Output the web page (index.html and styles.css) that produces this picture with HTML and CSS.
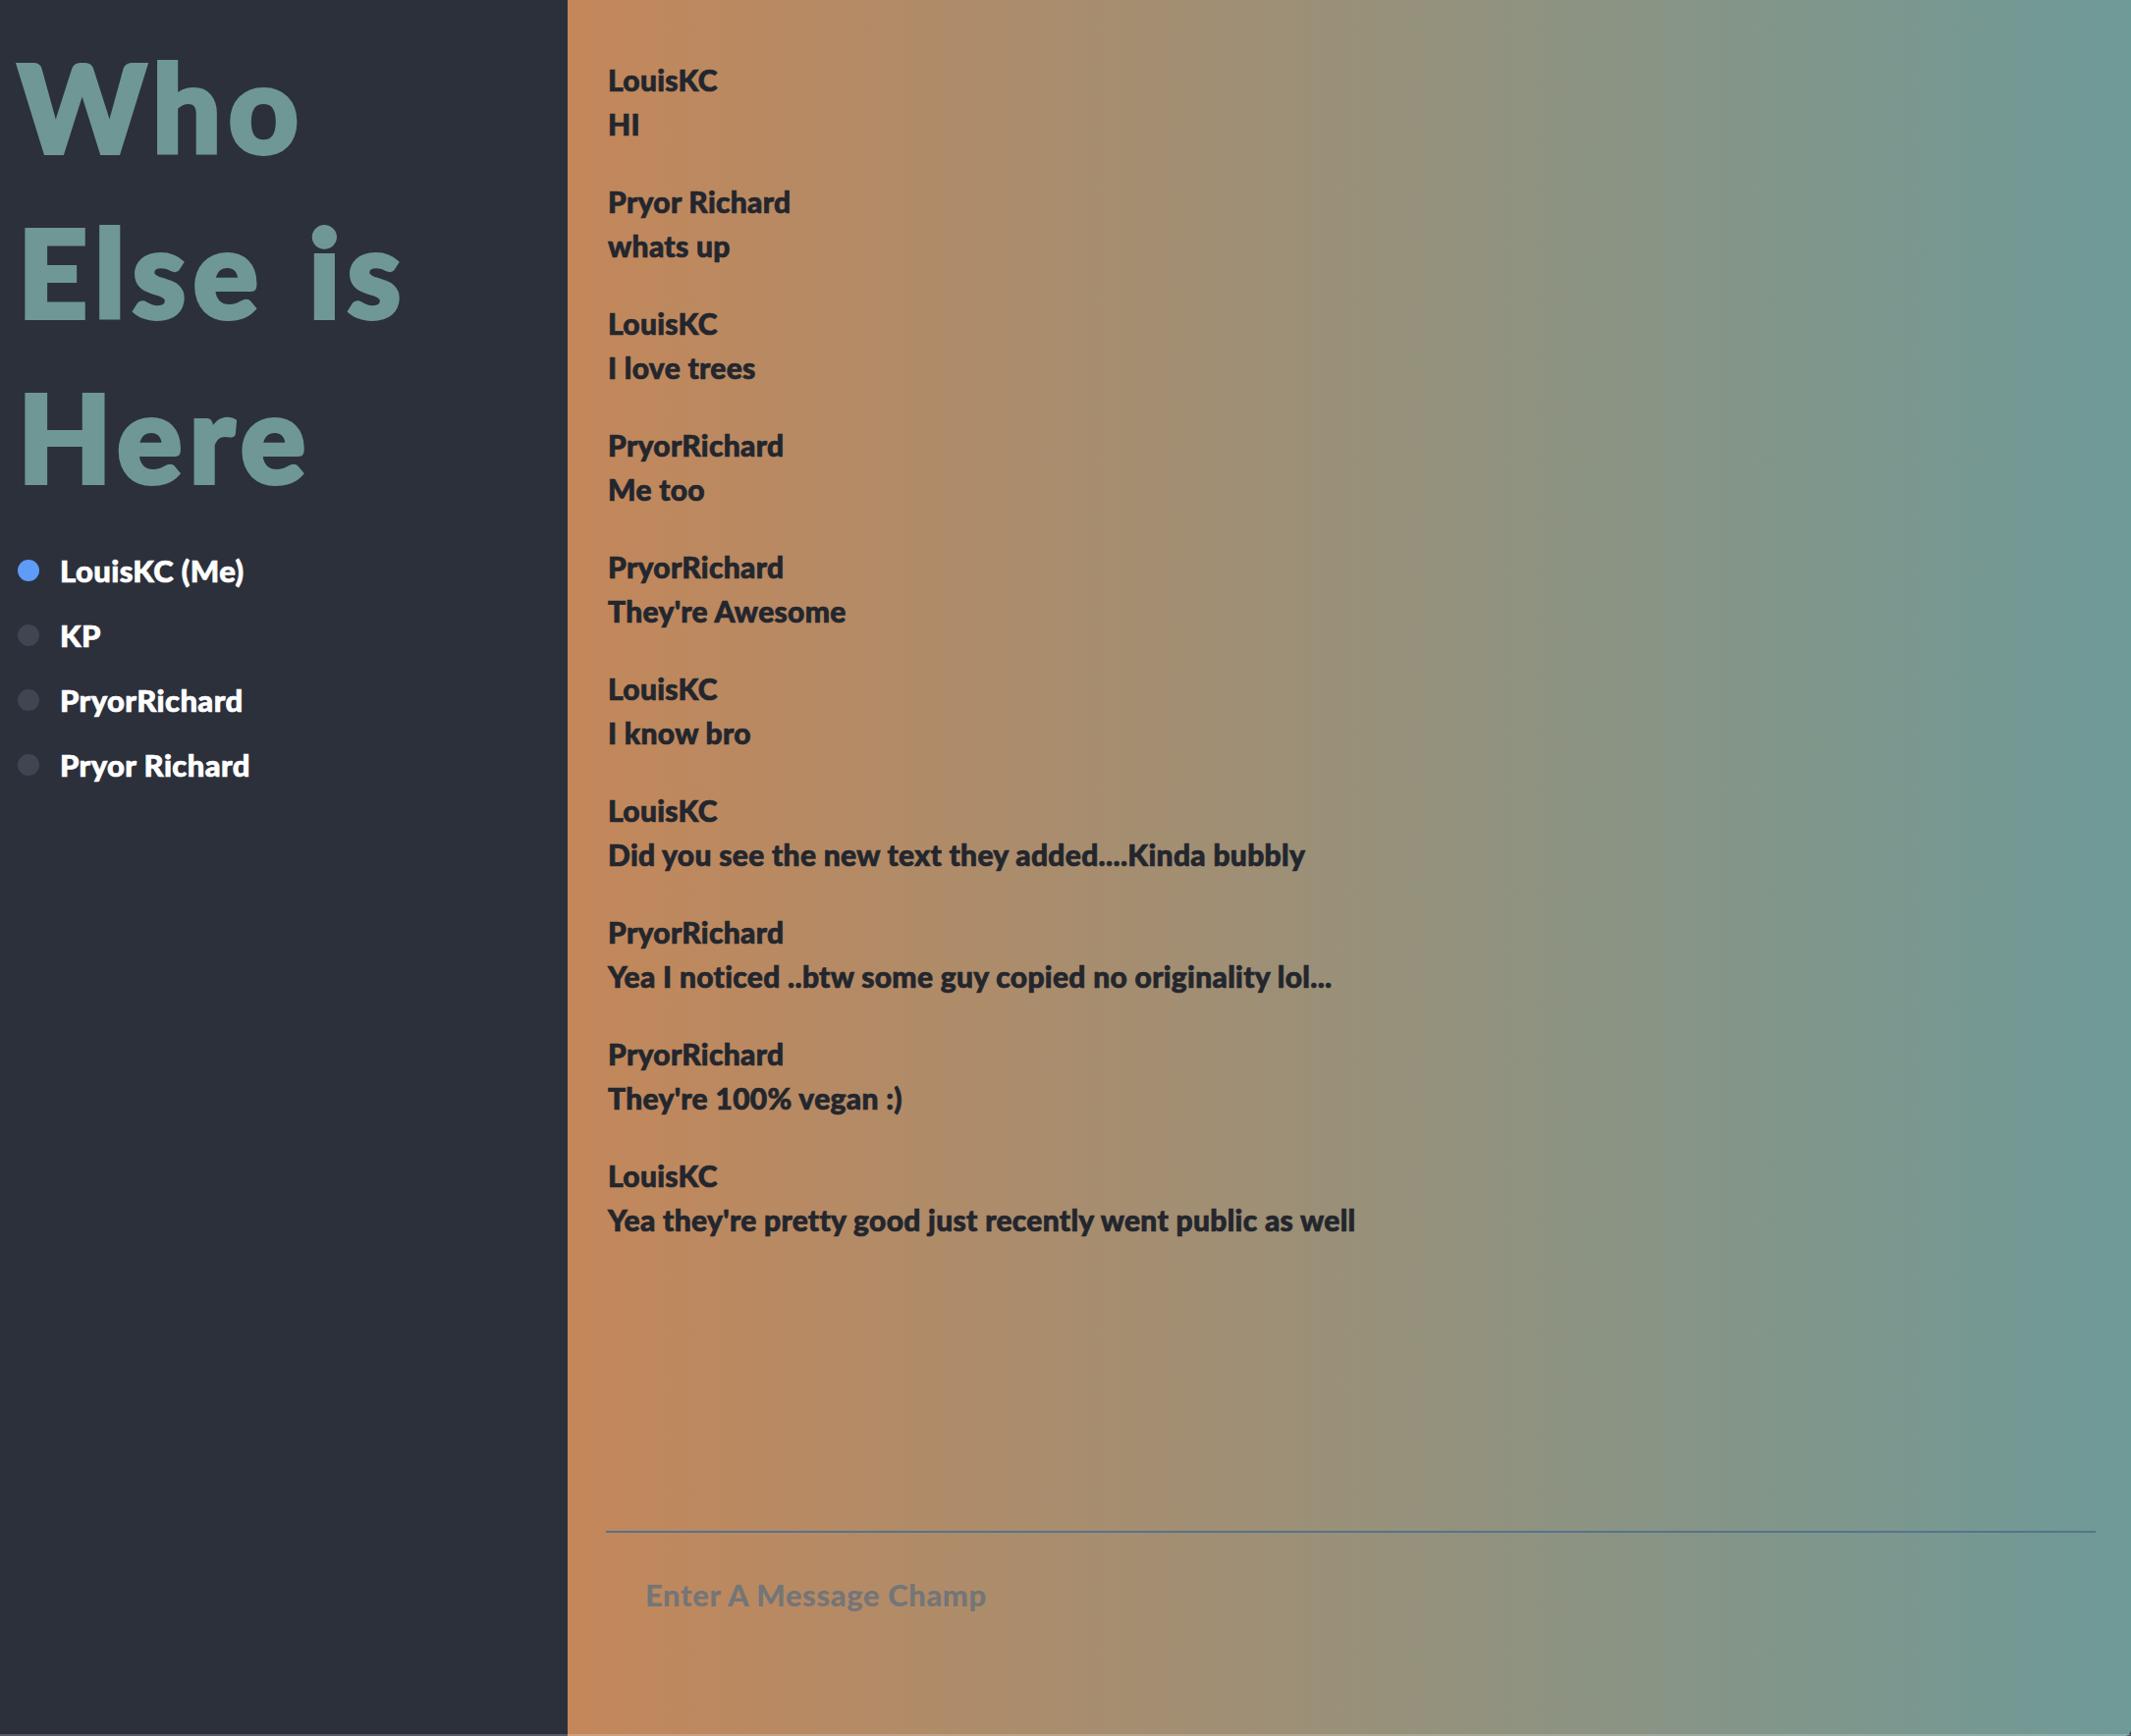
FILE: index.html
```html
<!DOCTYPE html>
<html lang="en">
<head>
<meta charset="utf-8">
<title>Chat</title>
<link rel="stylesheet" href="styles.css">
</head>
<body>
<div class="app">
  <aside class="sidebar">
    <h1 class="title">Who Else is Here</h1>
    <ul class="users">
      <li class="user"><span class="dot dot-active"></span><span class="user-name">LouisKC (Me)</span></li>
      <li class="user"><span class="dot"></span><span class="user-name">KP</span></li>
      <li class="user"><span class="dot"></span><span class="user-name">PryorRichard</span></li>
      <li class="user"><span class="dot"></span><span class="user-name">Pryor Richard</span></li>
    </ul>
  </aside>
  <main class="chat">
    <div class="messages">
      <div class="msg"><div class="msg-name">LouisKC</div><div class="msg-text">HI</div></div>
      <div class="msg"><div class="msg-name">Pryor Richard</div><div class="msg-text">whats up</div></div>
      <div class="msg"><div class="msg-name">LouisKC</div><div class="msg-text">I love trees</div></div>
      <div class="msg"><div class="msg-name">PryorRichard</div><div class="msg-text">Me too</div></div>
      <div class="msg"><div class="msg-name">PryorRichard</div><div class="msg-text">They're Awesome</div></div>
      <div class="msg"><div class="msg-name">LouisKC</div><div class="msg-text">I know bro</div></div>
      <div class="msg"><div class="msg-name">LouisKC</div><div class="msg-text">Did you see the new text they added....Kinda bubbly</div></div>
      <div class="msg"><div class="msg-name">PryorRichard</div><div class="msg-text">Yea I noticed ..btw some guy copied no originality lol...</div></div>
      <div class="msg"><div class="msg-name">PryorRichard</div><div class="msg-text">They're 100% vegan :)</div></div>
      <div class="msg"><div class="msg-name">LouisKC</div><div class="msg-text">Yea they're pretty good just recently went public as well</div></div>
    </div>
    <form class="composer">
      <input class="composer-input" type="text" placeholder="Enter A Message Champ">
    </form>
  </main>
</div>
</body>
</html>
```
FILE: styles.css
```css
* { box-sizing: border-box; }
html, body { margin: 0; padding: 0; }
body {
  font-family: "Lato", "Open Sans", sans-serif;
  font-weight: 900;
  background: #2c303b;
}
.app {
  position: relative;
  display: flex;
  height: 1768px;
  overflow: hidden;
}
.app::after {
  content: "";
  position: absolute;
  left: 0; right: 0; bottom: 0;
  height: 2px;
  background: rgba(255,255,255,0.2);
}
.sidebar {
  width: 578px;
  flex: none;
  background: #2c303b;
  padding: 0 18px;
}
.title {
  margin: 24px 0 0;
  font-family: "Lato", sans-serif;
  font-weight: 900;
  font-size: 124px;
  line-height: 168px;
  letter-spacing: 7px;
  word-spacing: 8px;
  color: #6e9795;
  -webkit-text-stroke: 4px #6e9795;
  width: 500px;
}
.users {
  list-style: none;
  margin: 20px 0 0;
  padding: 0;
}
.user {
  display: flex;
  align-items: center;
  height: 66px;
  gap: 21px;
}
.dot {
  width: 22px;
  height: 22px;
  border-radius: 50%;
  background: #414552;
  flex: none;
}
.dot-active { background: #5f9bf8; }
.user-name {
  color: #ffffff;
  font-size: 31px;
  letter-spacing: 0.4px;
  -webkit-text-stroke: 0.7px #ffffff;
}
.chat {
  flex: 1;
  display: flex;
  flex-direction: column;
  background: linear-gradient(to right, #c4875a, #6e9a98);
  padding: 58px 36px 0 39px;
  border-bottom-right-radius: 6px;
}
.messages {
  flex: 1;
  padding-left: 2px;
}
.msg {
  margin-bottom: 33px;
  color: #23262d;
  font-size: 30px;
  letter-spacing: 0.3px;
  -webkit-text-stroke: 0.7px #23262d;
}
.msg-name { line-height: 46px; }
.msg-text { line-height: 45px; }
.composer {
  border-top: 2px solid #56738c;
  height: 209px;
  flex: none;
  padding: 38px 0 0 40px;
}
.composer-input {
  background: transparent;
  border: none;
  outline: none;
  font-family: "Lato", sans-serif;
  font-weight: 900;
  font-size: 31px;
  letter-spacing: 0.6px;
  color: #23262d;
  width: 100%;
  padding: 0;
  height: 50px;
}
.composer-input::placeholder { color: #747577; opacity: 1; }
```
